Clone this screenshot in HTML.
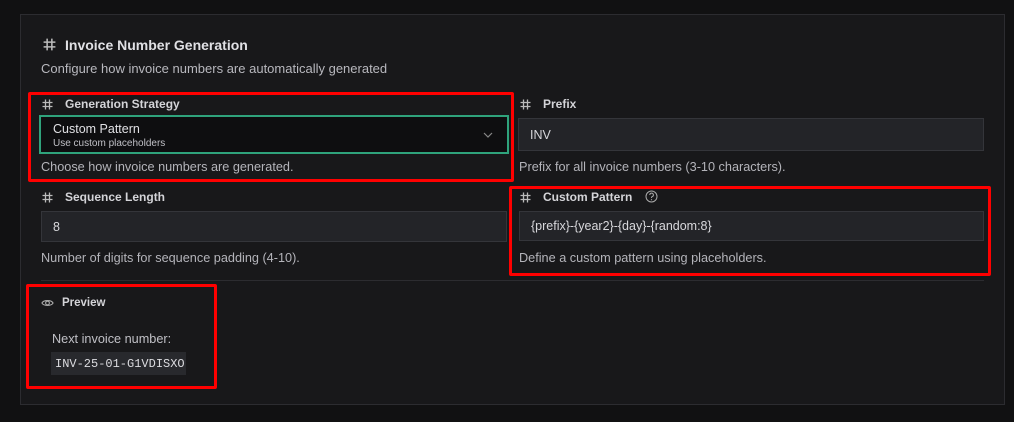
<!DOCTYPE html>
<html><head><style>
*{box-sizing:border-box;margin:0;padding:0}
body{width:1014px;height:422px;background:#111112;font-family:"Liberation Sans",sans-serif;color:#d8d8dc;position:relative;overflow:hidden}
.card{position:absolute;left:20px;top:14px;width:985px;height:391px;background:#18181a;border:1px solid #2c2c30}
.a{position:absolute}
.lbl{font-size:12px;font-weight:bold;color:#d4d4d8}
.help{font-size:12.7px;color:#b4b4ba}
.inp{position:absolute;background:#232428;border:1px solid #34353a;font-size:12.5px;color:#d8d8dc;padding-left:11px;display:flex;align-items:center}
.red{position:absolute;border:3px solid #f00;border-radius:2px}
</style></head><body>
<div class="card"></div>
<svg width="0" height="0" style="position:absolute"><defs><g id="h"><path d="M3.5 0.5v10M7.5 0.5v10M0.5 3.5h10M0.5 7.5h10" stroke="#bbb" stroke-width="1.3" fill="none"/></g></defs></svg>
<svg class="a" style="left:43px;top:38px" width="13" height="13" viewBox="0 0 11 11"><use href="#h"/></svg>
<div class="a" style="left:65px;top:37px;font-size:14px;font-weight:bold;color:#e0e0e4">Invoice Number Generation</div>
<div class="a help" style="left:41px;top:61px;color:#b8b8be;font-size:13px">Configure how invoice numbers are automatically generated</div>

<svg class="a" style="left:42px;top:99px" width="11" height="11" viewBox="0 0 11 11"><use href="#h"/></svg>
<div class="a lbl" style="left:65px;top:97px">Generation Strategy</div>
<div class="a" style="left:39px;top:115px;width:470px;height:39px;border:2px solid #2fa37c;background:#0e0e10">
 <div style="position:absolute;left:12px;top:5px;font-size:12.5px;color:#e0e0e4">Custom Pattern</div>
 <div style="position:absolute;left:12px;top:21px;font-size:10px;color:#c0c0c6">Use custom placeholders</div>
 <svg style="position:absolute;right:14px;top:14px" width="10" height="8" viewBox="0 0 10 8"><path d="M1 2l4 4 4-4" stroke="#888" fill="none" stroke-width="1.2"/></svg>
</div>
<div class="a help" style="left:41px;top:160px">Choose how invoice numbers are generated.</div>

<svg class="a" style="left:520px;top:99px" width="11" height="11" viewBox="0 0 11 11"><use href="#h"/></svg>
<div class="a lbl" style="left:543px;top:97px">Prefix</div>
<div class="inp" style="left:518px;top:118px;width:466px;height:33px">INV</div>
<div class="a help" style="left:519px;top:160px">Prefix for all invoice numbers (3-10 characters).</div>

<svg class="a" style="left:42px;top:192px" width="11" height="11" viewBox="0 0 11 11"><use href="#h"/></svg>
<div class="a lbl" style="left:65px;top:190px">Sequence Length</div>
<div class="inp" style="left:41px;top:211px;width:466px;height:31px">8</div>
<div class="a help" style="left:41px;top:251px">Number of digits for sequence padding (4-10).</div>

<svg class="a" style="left:520px;top:192px" width="11" height="11" viewBox="0 0 11 11"><use href="#h"/></svg>
<div class="a lbl" style="left:543px;top:190px">Custom Pattern</div>
<svg class="a" style="left:645px;top:190px" width="13" height="13" viewBox="0 0 13 13"><circle cx="6.5" cy="6.5" r="5.5" stroke="#aaa" fill="none"/><path d="M4.8 5a1.8 1.8 0 1 1 2.4 1.6c-.5.2-.7.5-.7 1v.4" stroke="#aaa" fill="none"/><circle cx="6.5" cy="9.7" r=".6" fill="#aaa"/></svg>
<div class="inp" style="left:519px;top:211px;width:465px;height:30px">{prefix}-{year2}-{day}-{random:8}</div>
<div class="a help" style="left:519px;top:251px">Define a custom pattern using placeholders.</div>

<div class="a" style="left:41px;top:280px;width:943px;height:1px;background:#2c2c30"></div>

<svg class="a" style="left:41px;top:298px" width="13" height="10" viewBox="0 0 14 10"><path d="M1 5C3 1.5 11 1.5 13 5 11 8.5 3 8.5 1 5z" stroke="#aaa" fill="none" stroke-width="1.2"/><circle cx="7" cy="5" r="2" stroke="#aaa" fill="none" stroke-width="1.2"/></svg>
<div class="a lbl" style="left:62px;top:297px;font-size:11.5px">Preview</div>
<div class="a help" style="left:52px;top:332px;color:#c0c0c6">Next invoice number:</div>
<div class="a" style="left:51px;top:352px;width:135px;height:23px;background:#28292d;font-family:'Liberation Mono',monospace;font-size:12px;color:#dcdce0;padding:5px 0 0 4px">INV-25-01-G1VDISXO</div>

<div class="red" style="left:28px;top:92px;width:486px;height:90px"></div>
<div class="red" style="left:509px;top:186px;width:482px;height:90px"></div>
<div class="red" style="left:26px;top:284px;width:191px;height:105px"></div>
</body></html>
